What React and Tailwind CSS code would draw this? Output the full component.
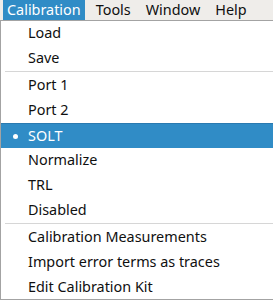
import { Fragment } from 'react';

const menuBar = ['Calibration', 'Tools', 'Window', 'Help'];

const items = [
  { label: 'Load' },
  { label: 'Save' },
  { sep: true },
  { label: 'Port 1' },
  { label: 'Port 2' },
  { label: 'SOLT', checked: true },
  { label: 'Normalize' },
  { label: 'TRL' },
  { label: 'Disabled' },
  { sep: true },
  { label: 'Calibration Measurements' },
  { label: 'Import error terms as traces' },
  { label: 'Edit Calibration Kit' },
];

export default function App() {
  return (
    <div className="w-[273px] h-[300px] overflow-hidden bg-white font-['Noto_Sans',sans-serif] text-[14.4px] leading-none text-[#101010]">
      {/* menu bar */}
      <div className="flex h-[20px] pl-[3px] gap-[7px] bg-[#efedea]">
        {menuBar.map((m, i) => (
          <div
            key={m}
            className={
              i === 0
                ? 'flex items-center px-[4px] bg-[#308cc6] text-white'
                : 'flex items-center px-[4px]'
            }
          >
            {m}
          </div>
        ))}
      </div>

      {/* dropdown */}
      <div className="w-[320px] h-[280px] border-t border-l border-b border-[#a3a3a3] bg-white">
        {items.map((it, i) =>
          it.sep ? (
            <div key={i} className="ml-[4px] h-px mb-px bg-[#d6d6d6]" />
          ) : (
            <div
              key={i}
              className={
                it.checked
                  ? 'flex items-center h-[25px] bg-[#308cc6] border-t border-[#2a7ab0] text-white'
                  : 'flex items-center h-[25px]'
              }
            >
              <div className="w-[27px] flex justify-center pl-[2px]">
                {it.checked && <span className="w-[5px] h-[5px] rounded-full bg-white" />}
              </div>
              <span>{it.label}</span>
            </div>
          )
        )}
      </div>
    </div>
  );
}
